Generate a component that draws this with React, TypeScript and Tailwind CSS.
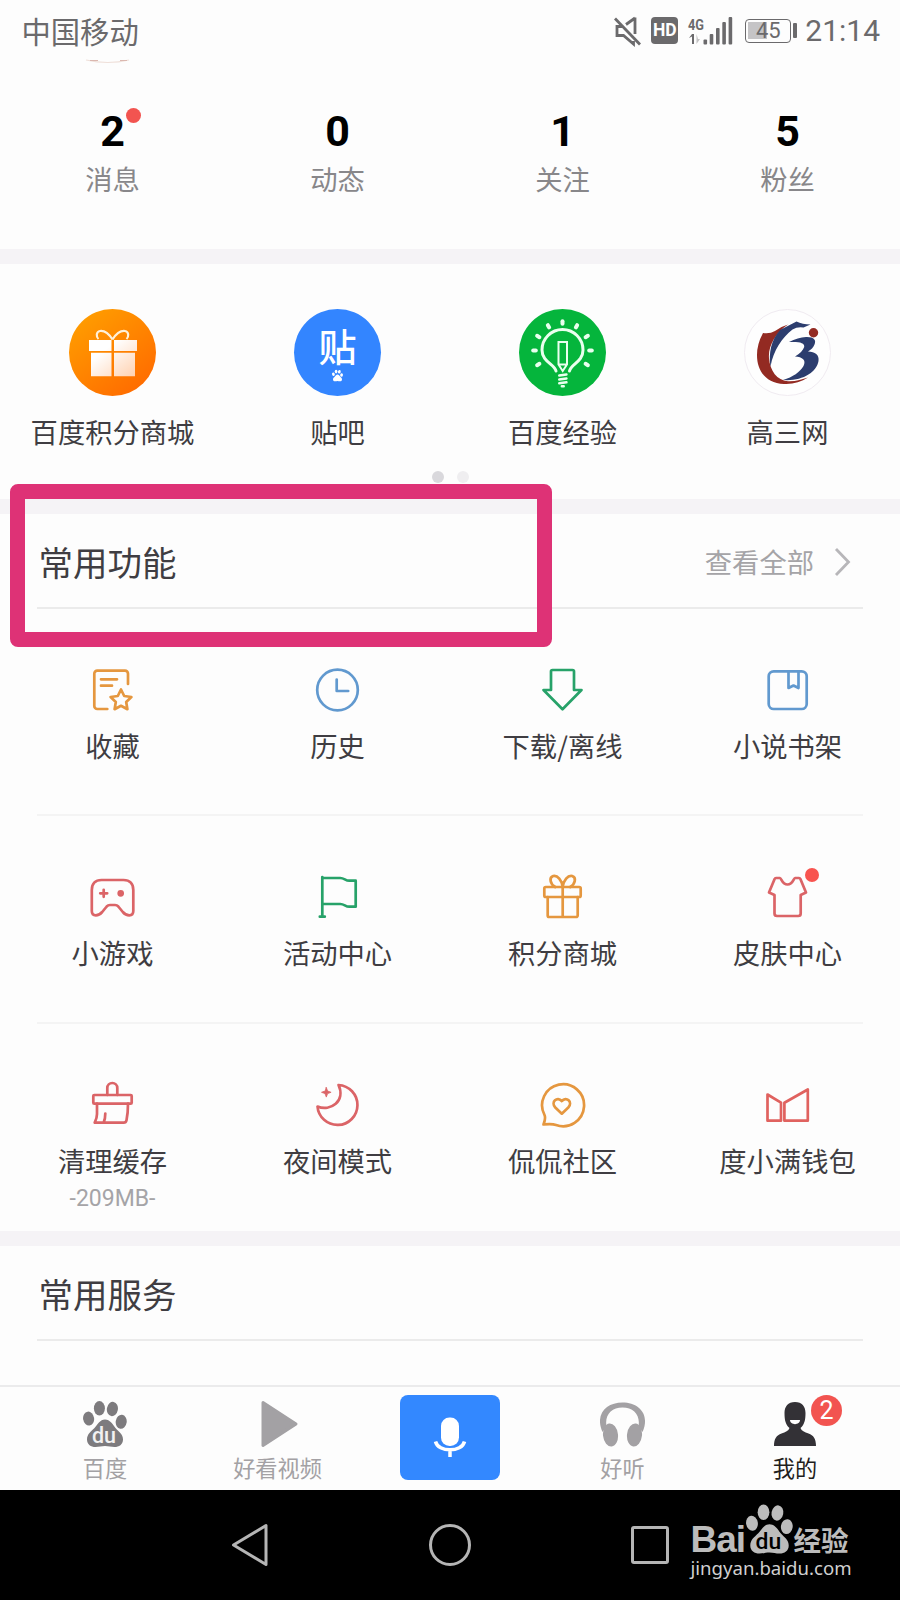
import type { ReactNode } from 'react'

const RED = '#db6467'
const ORANGE = '#e5973f'
const GREEN = '#27a269'
const BLUE = '#6199cf'

function LineIcon({ color, children }: { color: string; children: ReactNode }) {
  return (
    <svg
      width="48"
      height="48"
      viewBox="0.5 0 48 48"
      fill="none"
      stroke={color}
      strokeWidth="2.7"
      strokeLinecap="round"
      strokeLinejoin="round"
    >
      {children}
    </svg>
  )
}

function Paw({ className, mark }: { className?: string; mark?: string }) {
  return (
    <svg viewBox="0 0 44 46" className={className} fill="currentColor">
      <ellipse cx="5.6" cy="17.6" rx="5.5" ry="7" transform="rotate(-8 5.6 17.6)" />
      <ellipse cx="16.4" cy="7.3" rx="5.5" ry="7.2" />
      <ellipse cx="29.4" cy="8" rx="5.5" ry="7.2" transform="rotate(10 29.4 8)" />
      <ellipse cx="38.2" cy="20.8" rx="5.5" ry="7" transform="rotate(8 38.2 20.8)" />
      <path d="M22 18.500c5 0 7.500 4.500 10.500 8.500 3.500 4 7.500 6 7.500 11.500 0 5-4 7.500-8.500 7.500-3.500 0-6-1-9.500-1s-6 1-9.500 1C8 46 4 43.500 4 38.500 4 33 8 30.500 11.500 27c3.500-4 5.500-8.500 10.500-8.500z" />
      {mark && (
        <text
          x="21"
          y="41.500"
          textAnchor="middle"
          fontFamily="Roboto, sans-serif"
          fontWeight="500"
          fontSize="21.500"
          fill={mark}
        >
          du
        </text>
      )}
    </svg>
  )
}

function StatusBar() {
  return (
    <header className="flex h-[62px] items-start justify-between pl-[21.5px] pr-[20px] text-[#6b6a6c]">
      <span className="mt-[13px] text-[29.3px] leading-[34px]">中国移动</span>
      <div className="mt-[14px] flex h-[34px] items-center">
        <svg width="30" height="32" viewBox="0 0 30 32" fill="none" stroke="currentColor" strokeWidth="2.8">
          <path d="M2 3.500 27 29.500" />
          <path d="M22 2.500v16.500M22 3 13 9.500" />
          <path d="M9 11.500H4v9h6.500l10 8.500v-3" />
        </svg>
        <span className="mb-px ml-[8px] flex h-[27px] w-[27px] items-center justify-center rounded-[4px] bg-[#6b6a6c] font-[Roboto] text-[17.5px] font-bold text-white">
          HD
        </span>
        <svg width="46" height="28" viewBox="0 0 46 28" className="mb-px ml-[9px]" fill="currentColor">
          <text x="1" y="12.500" fontFamily="Roboto, sans-serif" fontWeight="700" fontSize="15.500" textLength="16" lengthAdjust="spacingAndGlyphs">
            4G
          </text>
          <path d="M5 27V19.500L2 21l3-4h2v10z" />
          <path d="M9.500 17v10l3.500-5h-2z" opacity=".4" />
          <rect x="16.500" y="22.500" width="3.600" height="5" rx="1" />
          <rect x="22.700" y="17" width="3.600" height="10.500" rx="1" />
          <rect x="29" y="11" width="3.600" height="16.500" rx="1" />
          <rect x="35.300" y="5" width="3.600" height="22.500" rx="1" />
          <rect x="41.600" y="0" width="3.600" height="27.500" rx="1" />
        </svg>
        <div className="relative mb-px ml-[12px] flex h-[24px] w-[46px] items-center justify-center rounded-[4px] border-[1.5px] border-[#6b6a6c]">
          <span className="absolute left-[2px] top-[2px] h-[17px] w-[19px] bg-[#c5c4c6]" />
          <span className="relative font-[Roboto] text-[22px] leading-none">45</span>
        </div>
        <span className="mb-px ml-[2px] h-[15px] w-[4px] rounded-[1px] bg-[#6b6a6c]" />
        <span className="ml-[8px] font-[Roboto] text-[30px] leading-none">21:14</span>
      </div>
    </header>
  )
}

const stats = [
  { value: '2', label: '消息', dot: true },
  { value: '0', label: '动态' },
  { value: '1', label: '关注' },
  { value: '5', label: '粉丝' },
]

function Stats() {
  return (
    <section className="relative grid h-[187px] grid-cols-4">
      {/* bottom edge of the avatar, scrolled under the status bar */}
      <svg className="absolute left-[85px] top-[-3px]" width="46" height="6" viewBox="0 0 46 6" fill="none">
        <path d="M1 1Q23 6 44 1" stroke="#efe0da" strokeWidth="1.200" />
        <path d="M5 1.500h8M35 1.500h7" stroke="#dbb8b0" strokeWidth="1.200" />
      </svg>
      {stats.map((s) => (
        <div key={s.label} className="flex flex-col items-center pt-[47px]">
          <span className="relative font-[Roboto] text-[43px] font-bold leading-[44px] text-black">
            {s.value}
            {s.dot && <i className="absolute left-[26px] top-[-1px] h-[15px] w-[15px] rounded-full bg-[#f25450]" />}
          </span>
          <span className="mt-[11px] text-[27.3px] leading-[28px] text-[#88878a]">{s.label}</span>
        </div>
      ))}
    </section>
  )
}

function MallLogo() {
  return (
    <svg width="87" height="87" viewBox="0 0 87 87">
      <defs>
        <linearGradient id="mall" x1="0.100" y1="0.100" x2="0.800" y2="1">
          <stop offset="0" stopColor="#ff9d00" />
          <stop offset="1" stopColor="#ff6a00" />
        </linearGradient>
        <linearGradient id="box" x1="0" y1="0" x2="1" y2="1">
          <stop offset="0.300" stopColor="#fff" />
          <stop offset="1" stopColor="#ffd0ae" />
        </linearGradient>
      </defs>
      <circle cx="43.500" cy="43.500" r="43.500" fill="url(#mall)" />
      <path d="M20 31h22.500v11H20zM45 31h23v11H45zM22 43.800h20.500v23.500H22zM45 43.800h21v23.500H45z" fill="url(#box)" />
      <path
        d="M43.500 30.500C40 25 35 21.500 31 22c-4 .6-4 6-1.500 8M43.500 30.500C47 25 52 21.500 56 22c4 .6 4 6 1.500 8"
        fill="none"
        stroke="#fff0d8"
        strokeWidth="2.200"
      />
    </svg>
  )
}

function TiebaLogo() {
  return (
    <div className="flex h-[87px] w-[87px] flex-col items-center rounded-full bg-[#3385ff] text-white">
      <span className="mt-[16px] text-[38px] font-medium leading-[40px]">贴</span>
      <Paw className="mt-[4px] h-[13px] w-[11px]" />
    </div>
  )
}

const rays = [-120, -90, -60, -30, 0, 30, 60, 90, 120]

function JingyanLogo() {
  return (
    <svg width="87" height="87" viewBox="0 0 87 87" fill="none" stroke="#e9ffee" strokeLinecap="round">
      <circle cx="43.500" cy="43.500" r="43.500" fill="#05b53c" stroke="none" />
      {rays.map((deg) => (
        <path key={deg} d="M43.500 14.800v-2.600" strokeWidth="4" transform={`rotate(${deg} 43.500 41.500)`} />
      ))}
      <path d="M37 62c-1.500-7-14-9-14-21a20.500 20.500 0 0 1 41 0c0 12-12 14-13.500 21" strokeWidth="3" />
      <path d="M39.500 33h8.500v22.500L43.700 62l-4.200-6.500zM39.500 55.500H48" strokeWidth="2" />
      <path d="M40.200 66.500l7.300-1M40.200 70.500l7.300-1M40.200 74.300l7.300-1M42.800 77.200h2" strokeWidth="2.400" />
    </svg>
  )
}

function GaosanLogo() {
  return (
    <svg width="87" height="87" viewBox="0 0 87 87">
      <circle cx="43.500" cy="43.500" r="43" fill="#fefefe" stroke="#f0ebf1" />
      <path
        d="M19 24q7 1 12-2 6-4.500 13-6.500C31 24 24 38 25 49c1 13 8 22.500 19 23.200 8 .3 14-1.700 20-3.700-7 4.500-15 7-24 6.500C22 74 13 62 13 46q0-11 6-22z"
        fill="#932a22"
      />
      <path d="M36 21l16.500-8.500q6 3 14 3l-7 3q-6-1-11 2C38 29 29.500 41 26.500 57.500 24.500 44 27 31 36 21z" fill="#2c3d6e" />
      <path
        d="M45 33q9-4.500 17-5c8-.3 10.500 3 8.500 7.500-1 3-3.500 5-6.500 7 7 0 11.500 3.500 10.500 9.500C72.500 63.500 58 72.500 39 71c10-3 17-8 20.500-14 3-6-1-9-8.500-9.500 5-3 8-6 9.200-9.500C61 33.500 55 32.500 45 33z"
        fill="#2c3d6e"
      />
      <circle cx="69.500" cy="23.700" r="4.700" fill="#932a22" />
    </svg>
  )
}

const apps = [
  { label: '百度积分商城', logo: <MallLogo /> },
  { label: '贴吧', logo: <TiebaLogo /> },
  { label: '百度经验', logo: <JingyanLogo /> },
  { label: '高三网', logo: <GaosanLogo /> },
]

function Apps() {
  return (
    <section className="h-[235px] pt-[45px]">
      <div className="grid grid-cols-4">
        {apps.map((app) => (
          <div key={app.label} className="flex flex-col items-center">
            {app.logo}
            <span className="mt-[21px] text-[27.3px] leading-[28px] text-[#3f3d42]">{app.label}</span>
          </div>
        ))}
      </div>
      <div className="mt-[26px] flex justify-center gap-[13px]">
        <i className="h-[12px] w-[12px] rounded-full bg-[#d9d8dc]" />
        <i className="h-[12px] w-[12px] rounded-full bg-[#efeef0]" />
      </div>
    </section>
  )
}

const features = [
  [
    {
      label: '收藏',
      icon: (
        <LineIcon color={ORANGE}>
          <path d="M39.500 18V7.700a3 3 0 0 0-3-3H8.800a3 3 0 0 0-3 3V40a3 3 0 0 0 3 3h10" />
          <path d="M12.500 13.300h16M12.500 19.700h11" />
          <path d="M32.500 23.500l3.200 6.500 7.200 1-5.200 5 1.200 7.200-6.400-3.400-6.400 3.400 1.200-7.200-5.200-5 7.200-1z" />
        </LineIcon>
      ),
    },
    {
      label: '历史',
      icon: (
        <LineIcon color={BLUE}>
          <circle cx="24" cy="24" r="20.300" />
          <path d="M23.200 13.500v11.500h11.500" />
        </LineIcon>
      ),
    },
    {
      label: '下载/离线',
      icon: (
        <LineIcon color={GREEN}>
          <path d="M14 4h20a1.500 1.500 0 0 1 1.500 1.500V24h7.500L24 43.200 5 24h7.500V5.500A1.500 1.500 0 0 1 14 4z" />
        </LineIcon>
      ),
    },
    {
      label: '小说书架',
      icon: (
        <LineIcon color={BLUE}>
          <rect x="5.200" y="5.300" width="38" height="37.700" rx="5" />
          <path d="M25 5.500V22l5-2.500 5 2.500V5.500" />
        </LineIcon>
      ),
    },
  ],
  [
    {
      label: '小游戏',
      icon: (
        <LineIcon color={RED}>
          <path d="M13 7h22c6.500 0 9.800 4 9.800 10v21c0 3-1.500 4.300-4 4.300-3 0-4.500-1-6.500-3.300l-4.500-5.500q-1.300-1.500-3.300-1.500h-5q-2 0-3.300 1.500L13.700 39c-2 2.300-3.500 3.300-6.400 3.300-2.500 0-4-1.300-4-4.300V17C3.300 11 6.500 7 13 7z" />
          <path d="M15.200 16.800v7M11.700 20.300h7" />
          <circle cx="32.200" cy="20.300" r="2" fill={RED} />
        </LineIcon>
      ),
    },
    {
      label: '活动中心',
      icon: (
        <LineIcon color={GREEN}>
          <path d="M8.800 4v39.700M6.300 43.700h5" />
          <path d="M8.800 5h18c4 0 5 2.700 9 2.700h6.400v26h-6.400c-4 0-5-2.700-9-2.700h-18" />
        </LineIcon>
      ),
    },
    {
      label: '积分商城',
      icon: (
        <LineIcon color={ORANGE}>
          <rect x="5.800" y="14" width="36.400" height="10" rx="1.500" />
          <path d="M9.200 24v18.500a1.500 1.500 0 0 0 1.500 1.500h27a1.500 1.500 0 0 0 1.500-1.500V24M24.200 14v30" />
          <path d="M24.200 13.500c-1-6-5-11.500-9.500-10.500-4.500 1.500-3 8 2 11M24.200 13.500c1-6 5-11.500 9.500-10.500 4.500 1.500 3 8-2 11" />
        </LineIcon>
      ),
    },
    {
      label: '皮肤中心',
      dot: true,
      icon: (
        <LineIcon color={RED}>
          <path d="M12.500 5h4c1.500 0 2 6.500 7.500 6.500S30 5 31.500 5h4q1 0 1.400 1l5.600 13.500-5.300 2.500v18.500a2.500 2.500 0 0 1-2.500 2.500H13.500a2.500 2.500 0 0 1-2.500-2.500V22l-5.500-2.500L11.100 6q.4-1 1.400-1z" />
        </LineIcon>
      ),
    },
  ],
  [
    {
      label: '清理缓存',
      sub: '-209MB-',
      icon: (
        <LineIcon color={RED}>
          <path d="M18.800 14V7a5 5 0 0 1 10 0v7" />
          <rect x="4.800" y="14" width="38.400" height="8.700" rx="1" />
          <path d="M8.500 22.700V33q0 4-2.300 8.700h29q2.300 0 2.800-2.500 1.500-7 1.500-16.500M16.800 32.500q0 5-1.600 9" />
        </LineIcon>
      ),
    },
    {
      label: '夜间模式',
      icon: (
        <LineIcon color={RED}>
          <path d="M25 4A20 20 0 1 1 4 25.500C17 31 32.500 20 25 4z" />
          <path d="M12.800 6.500l1.300 3.500 3.500 1.300-3.500 1.300-1.300 3.500-1.300-3.500L8 11.300l3.500-1.300z" fill={RED} strokeWidth="0.800" />
        </LineIcon>
      ),
    },
    {
      label: '侃侃社区',
      icon: (
        <LineIcon color={ORANGE}>
          <path d="M5 43.500c1-3 2.500-6.500 1-9.500A21 21 0 1 1 17.500 44c-4-1.500-8-1-12.500-.5z" />
          <path d="M23.300 32.700l-6.500-6.200c-5-5.500 2-11.500 6.500-6.500 4.500-5 11.500 1 6.500 6.500z" />
        </LineIcon>
      ),
    },
    {
      label: '度小满钱包',
      icon: (
        <LineIcon color="#e0625f">
          <path d="M4 13.500l13.500 8.200v18H4zM20.900 21.700L44.300 8.500v31.200H20.900z" />
        </LineIcon>
      ),
    },
  ],
]

function SectionTitle({ title, more }: { title: string; more?: string }) {
  return (
    <div className="mx-[37px] flex h-[95px] items-center justify-between border-b-2 border-[#ebebeb] pt-[2px]">
      <h2 className="pl-[1.5px] text-[34.5px] font-normal leading-none text-[#3f3d42]">{title}</h2>
      {more && (
        <div className="flex items-center pr-[12px] text-[27.3px] leading-none text-[#a5a4a7]">
          <span className="pt-[1px]">{more}</span>
          <svg className="ml-[20px]" width="17" height="30" viewBox="0 0 17 30" fill="none" stroke="#b7b6b9" strokeWidth="2.800">
            <path d="M2 2l12.500 13L2 28" />
          </svg>
        </div>
      )}
    </div>
  )
}

function FeatureGrid() {
  return (
    <section>
      {features.map((row, i) => (
        <div key={i} className="relative grid h-[207.4px] grid-cols-4">
          {row.map((f) => (
            <div key={f.label} className="flex flex-col items-center pt-[57px]">
              <div className="relative h-[48px]">
                {f.icon}
                {'dot' in f && (
                  <i className="absolute left-[41px] top-[-5px] h-[14px] w-[14px] rounded-full bg-[#f8544f]" />
                )}
              </div>
              <span className="mt-[17px] text-[27.3px] leading-[28px] text-[#3f3d42]">{f.label}</span>
              {'sub' in f && <span className="mt-[13px] font-[Roboto] text-[23px] leading-[24px] text-[#a5a4a7]">{f.sub}</span>}
            </div>
          ))}
          {i < features.length - 1 && <hr className="absolute inset-x-[37px] bottom-0 border-t-2 border-[#f4f4f4]" />}
        </div>
      ))}
    </section>
  )
}

function Tab({ label, active, children }: { label: string; active?: boolean; children: ReactNode }) {
  return (
    <div className="flex flex-col items-center pt-[14px]">
      <div className="relative h-[48px]">{children}</div>
      <span className={`mt-[6px] text-[22.2px] leading-[24px] ${active ? 'text-[#1f1e20]' : 'text-[#a3a1a4]'}`}>{label}</span>
    </div>
  )
}

function TabBar() {
  return (
    <nav className="grid h-[105px] grid-cols-5 border-t-2 border-[#ebebec] px-[18.75px]">
      <Tab label="百度">
        <Paw className="h-[46px] w-[44px] text-[#7d7b7e]" mark="#f1f1f1" />
      </Tab>
      <Tab label="好看视频">
        <svg width="44" height="48" viewBox="1.5 1 44 48">
          <path d="M8.500 2.500l33 21.500-33 21.500z" fill="#a3a1a4" stroke="#a3a1a4" strokeWidth="3" strokeLinejoin="round" />
        </svg>
      </Tab>
      <div className="flex justify-center pt-[8px]">
        <div className="flex h-[85px] w-[100px] items-center justify-center rounded-[8px] bg-[#3388ff]">
          <svg width="34" height="42" viewBox="0 0 34 42" fill="none">
            <rect x="8" y="0.500" width="18" height="28.500" rx="8.500" fill="#fff" />
            <path d="M2.500 24.500C5 35.500 29 35.500 31.500 24.500M17 33v7" stroke="#fff" strokeWidth="3.500" />
          </svg>
        </div>
      </div>
      <Tab label="好听">
        <svg width="46" height="46" viewBox="0.5 0 46 46" fill="#a3a1a4">
          <path d="M3 31C-5 13 7 1.500 23 1.500s28 11.500 20 29.500l-4-6C41 14 34 6.500 23 6.500S5 14 7 25z" />
          <ellipse cx="11" cy="34" rx="7.500" ry="11.500" transform="rotate(-6 11 34)" />
          <ellipse cx="35" cy="34" rx="7.500" ry="11.500" transform="rotate(6 35 34)" />
        </svg>
      </Tab>
      <Tab label="我的" active>
        <svg width="42" height="46" viewBox="0 0 42 46" fill="#333136">
          <path d="M21 1c7 0 10.500 4.500 10.500 11 0 7-1 11.500-5 15 1 3 4 4 8 5.500 5 2 7.500 5 7.500 12.500H0c0-7.500 2.500-10.500 7.500-12.500 4-1.500 7-2.500 8-5.500-4-3.500-5-8-5-15C10.500 5.500 14 1 21 1z" />
          <path d="M16 19h10c0 5.500-10 5.500-10 0z" fill="#fff" />
        </svg>
        <span className="absolute left-[37px] top-[-6px] flex h-[31px] w-[31px] items-center justify-center rounded-full bg-[#f25450] font-[Roboto] text-[25px] leading-none text-white">
          2
        </span>
      </Tab>
    </nav>
  )
}

function SystemNav() {
  return (
    <footer className="relative flex h-[110px] items-center bg-black pl-[230px]">
      <svg width="42" height="46" viewBox="0 0 42 46" fill="none" stroke="#b5b5b5" strokeWidth="3" strokeLinejoin="round">
        <path d="M36 3.500v39L3.500 23z" />
      </svg>
      <i className="ml-[157px] h-[42px] w-[42px] rounded-full border-[3px] border-[#b5b5b5]" />
      <i className="ml-[160px] h-[38px] w-[38px] rounded-[3px] border-[3px] border-[#b5b5b5]" />
      {/* site watermark */}
      <div className="absolute left-[690.5px] top-[13px] text-[#bcbcbc]">
        <div className="flex h-[52px] items-end">
          <span className="w-[54px] translate-y-[3px] font-['Liberation_Sans'] text-[37px] font-bold leading-[37px] tracking-[-1px]">Bai</span>
          <Paw className="mb-[1px] ml-[1px] h-[50px] w-[47px] shrink-0" mark="#000" />
          <span className="ml-px text-[27.5px] font-bold leading-[31px]">经验</span>
        </div>
        <div className="font-['Noto_Sans'] text-[18.6px] leading-[26px] text-[#d0d0d0]">jingyan.baidu.com</div>
      </div>
    </footer>
  )
}

export default function App() {
  return (
    <div className="relative flex h-[1600px] w-[900px] flex-col overflow-hidden bg-[#fdfdfd] font-['Noto_Sans_CJK_SC',sans-serif]">
      <StatusBar />
      <Stats />
      <div className="h-[15px] bg-[#f5f3f6]" />
      <Apps />
      <div className="h-[15px] bg-[#f5f3f6]" />
      <SectionTitle title="常用功能" more="查看全部" />
      <FeatureGrid />
      <div className="h-[15px] bg-[#f5f3f6]" />
      <SectionTitle title="常用服务" />
      <div className="flex-1" />
      <TabBar />
      <SystemNav />
      {/* highlight drawn over the section heading */}
      <div className="absolute left-[10px] top-[484px] h-[163px] w-[542px] rounded-[8px] border-[15px] border-[#de3276]" />
    </div>
  )
}
